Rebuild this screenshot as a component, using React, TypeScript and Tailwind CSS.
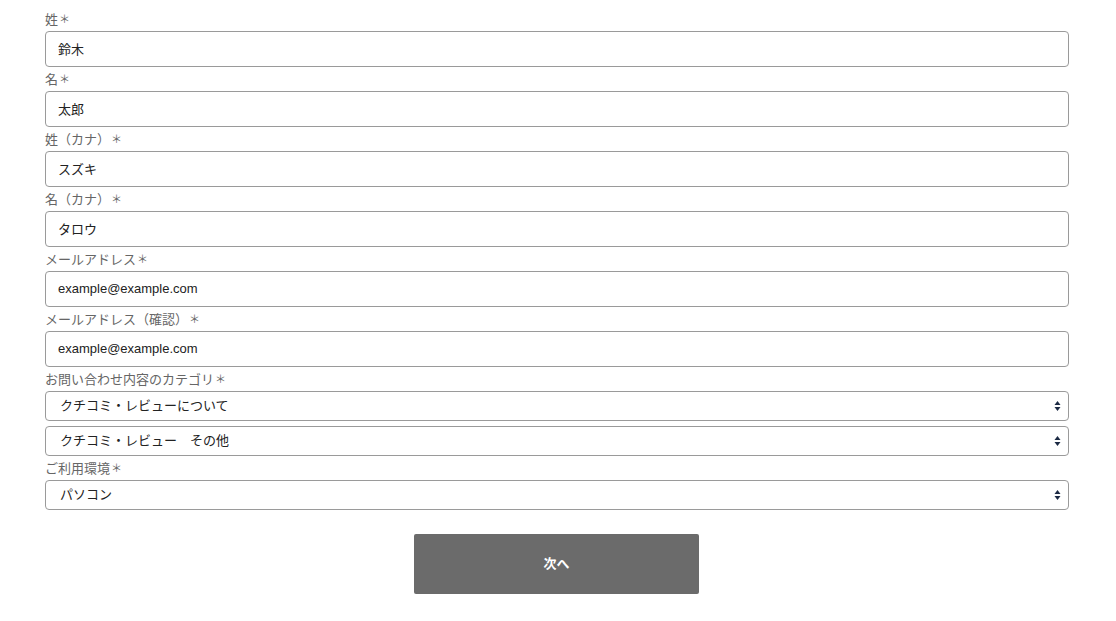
import React, { useState } from 'react';

const font = { fontFamily: '"Liberation Sans", Roboto, "Noto Sans CJK JP", sans-serif' };

function Label({ text }: { text: string }) {
  return (
    <div className="h-6 flex items-center pt-px text-[13px] text-[#666]">
      {text}
      <span className="text-[11px] ml-px">＊</span>
    </div>
  );
}

function TextField({ value }: { value: string }) {
  const [v, setV] = useState(value);
  return (
    <input
      value={v}
      onChange={e => setV(e.target.value)}
      className="block w-full h-9 border border-[#9a9a9a] rounded-[4px] px-3 pb-px text-[13px] text-[#222] outline-none"
    />
  );
}

function Arrows() {
  return (
    <svg className="absolute right-[8px] top-1/2 -translate-y-1/2 pointer-events-none" width="7" height="12" viewBox="0 0 7 12">
      <path d="M3.5 1 L6.5 5 L0.5 5 Z" fill="#1c2a44" />
      <path d="M3.5 11 L6.5 7 L0.5 7 Z" fill="#1c2a44" />
    </svg>
  );
}

function SelectField({ value, options }: { value: string; options: string[] }) {
  const [v, setV] = useState(value);
  return (
    <div className="relative">
      <select
        value={v}
        onChange={e => setV(e.target.value)}
        className="block w-full h-[30px] appearance-none border border-[#9a9a9a] rounded-[4px] pl-[14px] pr-6 text-[13px] text-[#222] bg-white outline-none"
      >
        {options.map(o => (
          <option key={o}>{o}</option>
        ))}
      </select>
      <Arrows />
    </div>
  );
}

export default function App() {
  return (
    <div className="bg-white min-h-screen" style={font}>
      <form className="ml-[45px] w-[1024px] pt-[7px]" onSubmit={e => e.preventDefault()}>
        <Label text="姓" />
        <TextField value="鈴木" />
        <Label text="名" />
        <TextField value="太郎" />
        <Label text="姓（カナ）" />
        <TextField value="スズキ" />
        <Label text="名（カナ）" />
        <TextField value="タロウ" />
        <Label text="メールアドレス" />
        <TextField value="example@example.com" />
        <Label text="メールアドレス（確認）" />
        <TextField value="example@example.com" />
        <Label text="お問い合わせ内容のカテゴリ" />
        <div className="flex flex-col gap-[5px]">
          <SelectField value="クチコミ・レビューについて" options={['クチコミ・レビューについて', '会員登録について', 'その他']} />
          <SelectField value="クチコミ・レビュー　その他" options={['クチコミ・レビュー　その他', 'クチコミ・レビュー　削除依頼']} />
        </div>
        <Label text="ご利用環境" />
        <SelectField value="パソコン" options={['パソコン', 'スマートフォン', 'タブレット']} />
        <div className="flex justify-center mt-6 pr-px">
          <button type="submit" className="w-[285px] h-[60px] bg-[#6b6b6b] text-white text-[13px] font-bold rounded-[2px]">
            次へ
          </button>
        </div>
      </form>
    </div>
  );
}
